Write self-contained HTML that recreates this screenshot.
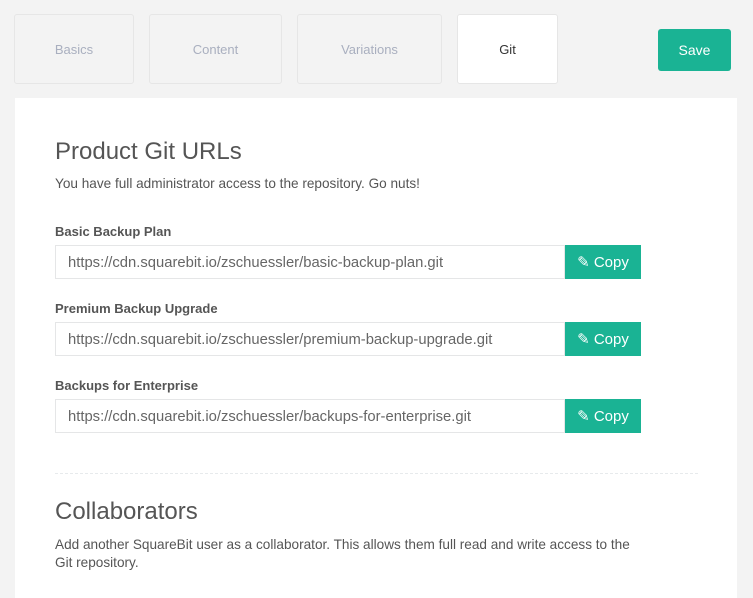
<!DOCTYPE html><html><head><style>
body{margin:0;background:#f3f3f3;font-family:"Liberation Sans",sans-serif;width:753px;height:588px;overflow:hidden;position:relative;color:#555}
.tab{position:absolute;top:14px;border:1px solid #e6e6e6;border-radius:3px;background:#f3f3f3;color:#a9afbf;font-size:13px;line-height:70px;text-align:center;box-sizing:border-box;height:70px}
.save{position:absolute;left:658px;top:29px;width:73px;height:42px;background:#1ab394;border-radius:3px;color:#fff;font-size:14px;line-height:42px;text-align:center}
.panel{position:absolute;left:15px;top:98px;width:722px;height:500px;background:#fff}
h2{position:absolute;left:55px;margin:0;font-weight:300;font-size:24px;color:#555}
.p{position:absolute;left:55px;font-size:13.6px;color:#555;line-height:18px}
.lbl{position:absolute;left:55px;font-size:13px;font-weight:bold;color:#555}
.inp{position:absolute;left:55px;width:510px;height:34px;border:1px solid #e5e6e7;box-sizing:border-box;font-size:14.8px;line-height:34px;padding-left:12px;color:#666}
.btn{position:absolute;left:565px;width:76px;height:34px;background:#1ab394;color:#fff;font-size:15px;line-height:36px;text-align:center}
</style></head><body>
<div class="tab" style="left:14px;width:120px">Basics</div>
<div class="tab" style="left:149px;width:133px">Content</div>
<div class="tab" style="left:297px;width:145px">Variations</div>
<div class="tab" style="left:457px;width:101px;background:#fff;color:#333">Git</div>
<div class="save">Save</div>
<div class="panel"></div>
<h2 style="top:138px">Product Git URLs</h2>
<div class="p" style="top:175px">You have full administrator access to the repository. Go nuts!</div>
<div class="lbl" style="top:224px">Basic Backup Plan</div>
<div class="inp" style="top:245px">https://cdn.squarebit.io/zschuessler/basic-backup-plan.git</div>
<div class="btn" style="top:245px">✎ Copy</div>
<div class="lbl" style="top:301px">Premium Backup Upgrade</div>
<div class="inp" style="top:322px">https://cdn.squarebit.io/zschuessler/premium-backup-upgrade.git</div>
<div class="btn" style="top:322px">✎ Copy</div>
<div class="lbl" style="top:378px">Backups for Enterprise</div>
<div class="inp" style="top:399px">https://cdn.squarebit.io/zschuessler/backups-for-enterprise.git</div>
<div class="btn" style="top:399px">✎ Copy</div>
<div style="position:absolute;left:55px;top:473px;width:643px;border-top:1px dashed #e7eaec"></div>
<h2 style="top:498px">Collaborators</h2>
<div class="p" style="top:536px;width:585px">Add another SquareBit user as a collaborator. This allows them full read and write access to the Git repository.</div>
</body></html>
